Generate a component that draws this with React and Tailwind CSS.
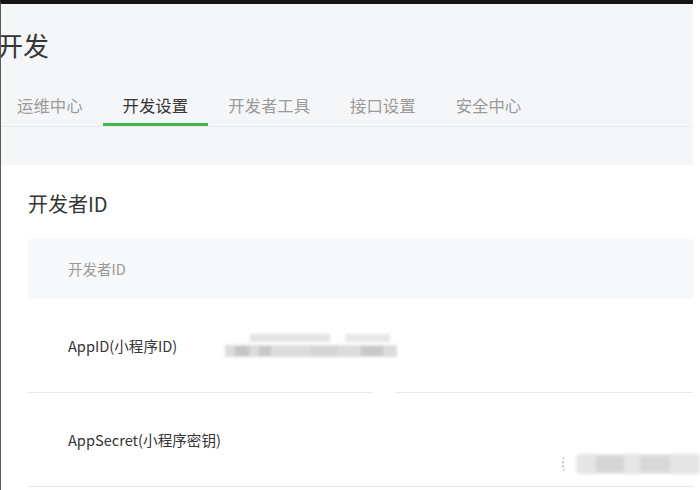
import React from "react";

const font = { fontFamily: '"Noto Sans CJK SC", "Noto Sans", sans-serif' };

export default function App() {
  const tabs = ["运维中心", "开发设置", "开发者工具", "接口设置", "安全中心"];
  return (
    <div className="relative w-[700px] h-[490px] bg-white overflow-hidden flex" style={font}>
      <div className="w-[693px] h-full flex flex-col bg-[#f5f6f8] border-t-4 border-t-[#151515] border-l border-l-[#5a5a5a] overflow-hidden">
        <div className="ml-[-4px]">
          <div className="mt-[23px] h-[36px] leading-[36px] text-[26px] text-[#353535] whitespace-nowrap">开发</div>
          <div className="mt-[30px] flex border-b border-[#e9eaee]">
            {tabs.map((t, i) => (
              <div
                key={t}
                className={
                  "px-[20px] pb-[6px] leading-[24px] text-[16.4px] whitespace-nowrap border-b-[3px] " +
                  (i === 1 ? "border-[#44b549] text-[#353535]" : "border-transparent text-[#9a9a9a]")
                }
              >
                {t}
              </div>
            ))}
          </div>
        </div>
        <div className="mt-[38px] flex-1 bg-white pl-[27px] pt-[25px]">
          <div className="h-[28px] leading-[28px] text-[20px] text-[#353535]">开发者ID</div>
          <div className="mt-[21px]">
            <div className="h-[60px] bg-[#f6f8f9] flex items-center pl-[40px] text-[14.5px] text-[#9a9a9a]">开发者ID</div>
            <div className="relative h-[94px] border-b border-[#e7e7eb] flex items-center text-[14.6px] text-[#353535]">
              <div className="w-[197px] pl-[40px] whitespace-nowrap">AppID(小程序ID)</div>
              <div className="flex flex-col gap-[3px] w-[172px]">
                <div className="flex gap-[15px] pl-[25px] blur-[1.5px]">
                  <div className="w-[80px] h-[8px] bg-[#e4e4e4]" />
                  <div className="w-[45px] h-[8px] bg-[#e8e8e8]" />
                </div>
                <div className="flex items-center gap-[10px] px-[10px] h-[12px] bg-[#dcdcdc] blur-[1.5px]">
                  <div className="w-[14px] h-[10px] bg-[#c4c4c4]" />
                  <div className="w-[12px] h-[10px] bg-[#c8c8c8]" />
                  <div className="w-[26px] h-[10px] bg-[#d4d4d4] ml-[30px]" />
                  <div className="w-[22px] h-[10px] bg-[#c9c9c9] ml-[14px]" />
                </div>
              </div>
              <div className="absolute left-[344px] bottom-[-3px] w-[24px] h-[6px] bg-white blur-[1px]" />
            </div>
            <div className="h-[94px] border-b border-[#e7e7eb] flex items-center text-[14.6px] text-[#353535]">
              <div className="w-[240px] pl-[40px] whitespace-nowrap">AppSecret(小程序密钥)</div>
            </div>
          </div>
        </div>
      </div>
      <div className="absolute left-[562px] top-[454px] flex items-center gap-[4px]">
        <div className="w-[10px] h-[16px] border-l-2 border-dotted border-[#c4c4c4] rounded-full" />
        <div className="flex items-center gap-[16px] w-[124px] h-[20px] pl-[20px] bg-[#e6e6e6] blur-[1.5px] rounded">
          <div className="w-[28px] h-[16px] bg-[#d6d6d6]" />
          <div className="w-[30px] h-[16px] bg-[#d8d8d8]" />
        </div>
      </div>
    </div>
  );
}
